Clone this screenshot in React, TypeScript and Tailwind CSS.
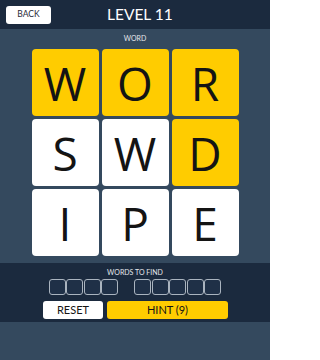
import { Fragment } from 'react';

type Tile = { letter: string; found: boolean };

const tiles: Tile[] = [
    { letter: 'W', found: true },
    { letter: 'O', found: true },
    { letter: 'R', found: true },
    { letter: 'S', found: false },
    { letter: 'W', found: false },
    { letter: 'D', found: true },
    { letter: 'I', found: false },
    { letter: 'P', found: false },
    { letter: 'E', found: false },
];

const words = [4, 5];

export default function App() {
    return (
        <div className="w-[270px] h-[360px] bg-[#34495e] flex flex-col font-['Lato','Open_Sans',sans-serif] overflow-hidden">
            <header className="h-[29px] bg-[#1b2a3e] flex items-center shrink-0">
                <button className="ml-[6px] w-[45px] h-[18px] bg-white rounded-[3px] text-[8.5px] text-[#1f2937] flex items-center justify-center">
                    BACK
                </button>
                <h1 className="ml-[56px] text-[15.5px] text-white leading-none">LEVEL 11</h1>
            </header>

            <p className="mt-[5px] h-[9px] text-center text-[7px] text-gray-200 leading-[9px]">WORD</p>

            <div className="mt-[6px] mx-auto w-[207px] grid grid-cols-3 gap-[3px]">
                {tiles.map((tile, i) => (
                    <div
                        key={i}
                        className={`h-[67px] rounded-[4px] flex items-center justify-center font-['Open_Sans',sans-serif] text-[46px] leading-none text-[#141414] ${tile.found ? 'bg-[#ffcc00]' : 'bg-white'}`}
                    >
                        {tile.letter}
                    </div>
                ))}
            </div>

            <section className="mt-[7px] h-[59px] bg-[#1b2a3e] flex flex-col items-center shrink-0">
                <p className="mt-[5px] text-[7px] leading-[8px] text-gray-200">WORDS TO FIND</p>
                <div className="mt-[3px] flex gap-[16px]">
                    {words.map((len, w) => (
                        <div key={w} className="flex gap-[0.5px]">
                            {Array.from({ length: len }).map((_, j) => (
                                <Fragment key={j}>
                                    <div className="w-[17px] h-[16px] rounded-[3px] border border-[#aab4bf] bg-[#1f3047]" />
                                </Fragment>
                            ))}
                        </div>
                    ))}
                </div>
                <div className="mt-[6px] flex gap-[4px] ml-[1px]">
                    <button className="w-[60px] h-[18px] bg-white rounded-[3px] text-[11px] text-[#141414] flex items-center justify-center">
                        RESET
                    </button>
                    <button className="w-[121px] h-[18px] bg-[#ffcc00] rounded-[3px] text-[11px] text-[#141414] flex items-center justify-center">
                        HINT (9)
                    </button>
                </div>
            </section>
        </div>
    );
}
